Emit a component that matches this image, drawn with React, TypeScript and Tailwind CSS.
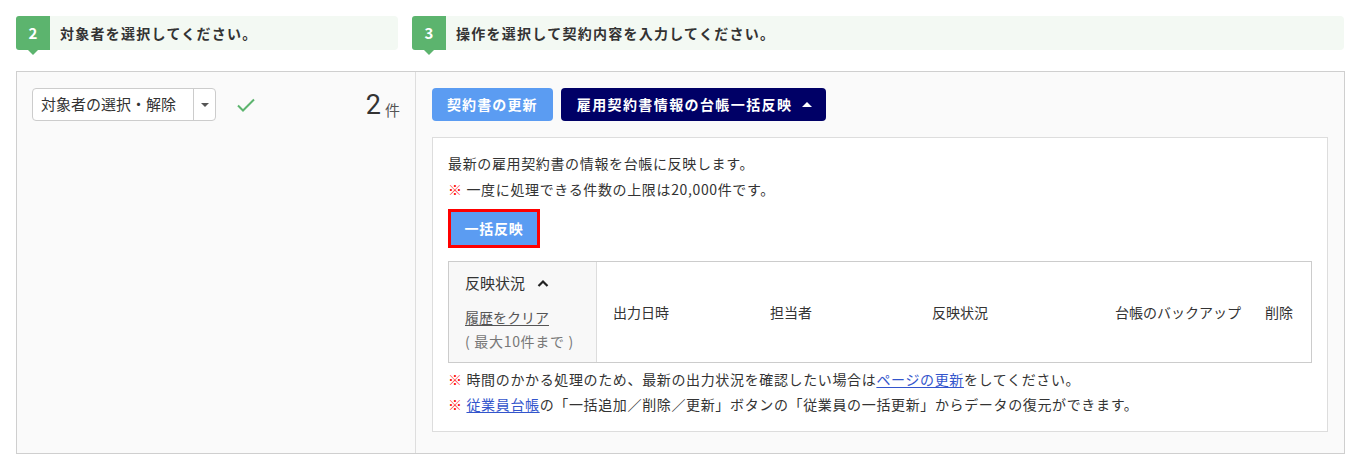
import React from "react";

const font = { fontFamily: '"Noto Sans CJK JP", "Noto Sans", sans-serif' };

function StepHeader({ n, text, className }: { n: string; text: string; className: string }) {
  return (
    <div className={`flex h-[34px] ${className}`}>
      <div className="relative flex h-[34px] w-[34px] shrink-0 items-center justify-center rounded-l-[3px] bg-[#5cb46e] text-[15px] font-bold text-white">
        {n}
        <div className="absolute left-1/2 top-full h-0 w-0 -translate-x-1/2 border-x-[5px] border-t-[5px] border-x-transparent border-t-[#5cb46e]" />
      </div>
      <div className="flex flex-1 items-center rounded-r-[4px] bg-[#f3f9f3] pl-[10px] text-[14px] font-bold tracking-[0.09em] text-[#333]">
        {text}
      </div>
    </div>
  );
}

const Red = () => <span className="font-bold text-[#ff0000]">※ </span>;

export default function App() {
  return (
    <div className="h-[466px] w-[1362px] bg-white pt-[16px] text-[#333]" style={font}>
      <div className="flex pl-[16px] pr-[18px]">
        <StepHeader n="2" text="対象者を選択してください。" className="w-[382px]" />
        <div className="w-[14px]" />
        <StepHeader n="3" text="操作を選択して契約内容を入力してください。" className="flex-1" />
      </div>

      <div className="ml-[16px] mr-[17px] mt-[21px] flex h-[383px] border border-[#cfcfcf] bg-[#fafafa]">
        {/* left column */}
        <div className="flex w-[399px] shrink-0 items-start border-r border-[#dedede] px-[15px] pt-[16px]">
          <div className="flex h-[33px] w-[184px] items-stretch rounded-[4px] border border-[#cccccc] bg-white">
            <div className="flex flex-1 items-center pl-[8px] text-[15px] text-[#333]">対象者の選択・解除</div>
            <div className="flex w-[22px] items-center justify-center border-l border-[#cccccc]">
              <div className="h-0 w-0 border-x-[4px] border-t-[4px] border-x-transparent border-t-[#555]" />
            </div>
          </div>
          <div className="ml-[20px] flex h-[33px] items-center">
            <svg width="20" height="16" viewBox="0 0 20 16">
              <path d="M2 8.5 L7 13.5 L18 2.5" fill="none" stroke="#5cb46e" strokeWidth="2" />
            </svg>
          </div>
          <div className="ml-auto flex h-[33px] items-end pb-[2px]">
            <span className="text-[27px] font-normal leading-none text-[#333]" style={{ fontFamily: '"Roboto", "Liberation Sans", sans-serif' }}>2</span>
            <span className="ml-[4px] text-[15px] leading-[18px] text-[#555]">件</span>
          </div>
        </div>

        {/* right column */}
        <div className="flex flex-1 flex-col px-[16px] pt-[16px]">
          <div className="flex gap-[8px]">
            <button className="h-[33px] rounded-[4px] bg-[#5b9cf2] px-[15px] text-[14px] font-bold tracking-[0.08em] text-white">
              契約書の更新
            </button>
            <button className="flex h-[33px] items-center rounded-[4px] bg-[#000066] pl-[16px] pr-[14px] text-[14px] font-bold tracking-[0.1em] text-white">
              雇用契約書情報の台帳一括反映
              <span className="ml-[10px] h-0 w-0 border-x-[5px] border-b-[5px] border-x-transparent border-b-white" />
            </button>
          </div>

          <div className="mt-[16px] border border-[#dddddd] bg-white px-[15px] pb-[14px] pt-[12px] tracking-[0.04em]">
            <div className="text-[14px] leading-[26px] text-[#333]">最新の雇用契約書の情報を台帳に反映します。</div>
            <div className="text-[14px] leading-[26px] text-[#333]">
              <Red />一度に処理できる件数の上限は20,000件です。
            </div>
            <div className="mt-[7px] inline-block border-[3px] border-[#ff0000]">
              <button className="flex h-[33px] w-[86px] items-center justify-center bg-[#5b9cf2] text-[14px] font-bold tracking-[0.05em] text-white">
                一括反映
              </button>
            </div>

            <div className="mt-[13px] flex h-[102px] border border-[#cccccc] tracking-normal">
              <div className="flex w-[148px] shrink-0 flex-col border-r border-[#dddddd] bg-[#f8f8f8] pl-[16px] pt-[10px]">
                <div className="flex h-[22px] items-center text-[15px] text-[#333]">
                  反映状況
                  <svg className="ml-[12px]" width="12" height="8" viewBox="0 0 12 8">
                    <path d="M1.5 7 L6 2.5 L10.5 7" fill="none" stroke="#222" strokeWidth="2.2" />
                  </svg>
                </div>
                <div className="mt-[12px] h-[22px] text-[14px] leading-[22px] text-[#555] underline underline-offset-2">履歴をクリア</div>
                <div className="mt-[2px] h-[22px] text-[14px] leading-[22px] tracking-[0.05em] text-[#777]">(&nbsp;最大10件まで&nbsp;)</div>
              </div>
              <div className="flex flex-1 items-center pl-[16px] text-[14px] text-[#333]">
                <div className="w-[157px]">出力日時</div>
                <div className="w-[162px]">担当者</div>
                <div className="w-[183px]">反映状況</div>
                <div className="w-[150px]">台帳のバックアップ</div>
                <div>削除</div>
              </div>
            </div>

            <div className="mt-[4px] text-[14px] leading-[25px] text-[#333]">
              <Red />時間のかかる処理のため、最新の出力状況を確認したい場合は
              <span className="text-[#3355cc] underline underline-offset-2">ページの更新</span>
              をしてください。
            </div>
            <div className="text-[14px] leading-[25px] text-[#333]">
              <Red /><span className="text-[#3355cc] underline underline-offset-2">従業員台帳</span>
              の「一括追加／削除／更新」ボタンの「従業員の一括更新」からデータの復元ができます。
            </div>
          </div>
        </div>
      </div>
    </div>
  );
}
